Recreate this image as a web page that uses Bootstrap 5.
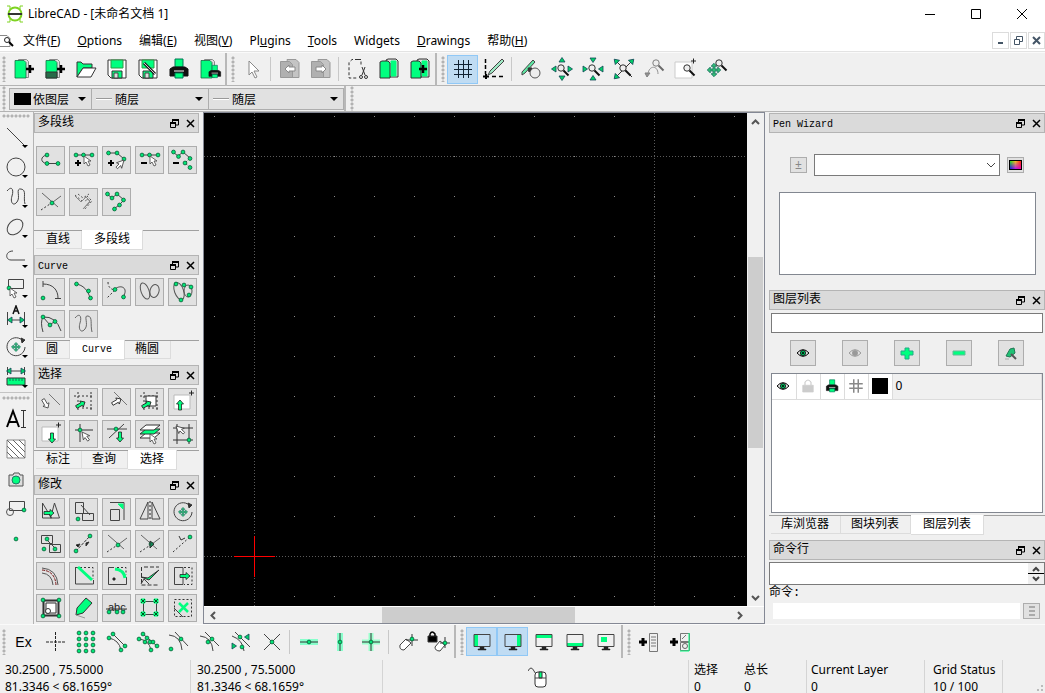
<!DOCTYPE html>
<html lang="zh-CN">
<head>
<meta charset="utf-8">
<meta name="viewport" content="width=device-width, initial-scale=1">
<title>LibreCAD - [未命名文档 1]</title>
<link href="https://cdn.jsdelivr.net/npm/bootstrap@5.3.0/dist/css/bootstrap.min.css" rel="stylesheet">
<style>
:root{--face:#f0f0f0;--edge:#adadad;--ink:#000;--green:#00ff7f}
body{font:12px/16px "Noto Sans","Noto Sans CJK SC",sans-serif;color:#000;background:var(--face);overflow:hidden}
button,input,select,ul,h2{font:inherit;color:inherit;margin:0}
button{background:none;border:0;padding:0;display:inline-flex;align-items:center;justify-content:center;flex:none}
svg{display:block;flex:none}
.title-row{height:28px}
.menu-row{height:24px;padding-top:2px;border-bottom:1px solid #e3e3e3}
.menu-row a{color:#000;text-decoration:none;padding:0 9px 0 8px;white-space:nowrap}
.win-btn{width:46px;height:28px}
.mdi-btn{width:17px;height:17px;border:1px solid #dcdcdc;margin-left:1px}
.tool-row{height:34px;border-bottom:1px solid #b4b4b4;border-top:1px solid #fafafa}
.tool-row button{width:31px;height:29px}
.tool-row button.on{background:#c0dcf3;border:1px solid #90c8f6}
.dots-v{width:8px;height:26px;background:radial-gradient(circle at 4px 2px,#b2b2b2 1px,transparent 2px) 0 0/8px 4px}
.dots-h{height:10px;width:28px;background:radial-gradient(circle at 2px 4px,#b2b2b2 1px,transparent 2px) 0 0/4px 10px}
.bar-edge{width:4px;height:33px;border-left:2px solid #b8b8b8}
.bar-sep{width:6px;height:24px;background:linear-gradient(90deg,transparent 2px,#c8c8c8 2px,#c8c8c8 3px,transparent 3px)}
.pen-row{height:26px;border-bottom:1px solid #b4b4b4}
.pen-row>.dots-v:first-child{margin-right:2px}
.pen-box{position:relative;border:1px solid var(--edge);background:#e1e1e1;height:22px;margin-left:-1px}
.pen-box select{appearance:none;border:0;background:none;height:20px;width:100%;padding:0 0 0 23px;outline:0;font-family:"Noto Sans CJK SC",sans-serif}
.pen-box::after{content:"";position:absolute;right:5px;top:8px;border:4px solid transparent;border-top-color:#000;border-bottom:0;pointer-events:none}
.pen-box i{position:absolute;left:4px;top:4px;width:17px;height:12px;background:#000}
.pen-box i.thin{top:9px;height:1px;width:16px;background:#fff;border-top:1px solid #999;box-sizing:content-box}
.side-tools{width:34px;border-right:1px solid #b4b4b4;padding-right:1px}
.side-tools button{width:32px;height:30px;position:relative}
.side-tools button.more::after{content:"";position:absolute;right:4px;bottom:4px;border:3px solid transparent;border-top-color:#000;border-bottom:0}
.side-split{border-top:1px solid #c4c4c4;width:100%;height:12px;padding-top:1px}
.dock-left{width:165px;padding-top:1px}
.dock-right{width:276px;padding-top:1px}
.dock-title{height:20px;background:#dadada;border:1px solid #b4b4b4;padding:0 0 0 3px}
.dock-title h2,.dock-tabs,.cjk{font-family:"Liberation Mono","Noto Sans CJK SC",sans-serif}
h2,.dock-tabs button{font-size:12px;line-height:16px}
.mono-s,.dock-tabs .mono-s{font-size:10px}
h2.mono-s{padding-top:3px}
.dock-title button{width:16px;height:16px}
.tool-grid{display:grid;grid-template-columns:repeat(5,29px);gap:4px;padding:3px 2px 0}
.tool-grid.roomy{padding-top:13px;row-gap:14px}
.tool-grid button,.sq{width:29px;height:28px;background:#e1e1e1;border:1px solid var(--edge)}
.dock-tabs{display:flex;border-top:1px solid #a0a0a0;padding-left:2px;margin:2px 0 5px;height:20px}
.dock-tabs.low{margin-top:14px}
.dock-tabs button{height:18px;padding:0 11px 0 10px;border:1px solid #dcdcdc;border-top:0;border-left:0}
.dock-tabs button.on{background:#fff;height:20px;margin-top:-1px;padding:0 12px}
.view{border:1px solid #848894;min-width:0}
.paper{background:#000;min-width:0;min-height:0;position:relative}
.paper svg{position:absolute;inset:0;width:100%;height:100%}
.scroll-v{width:17px}
.scroll-h{height:17px;border-top:1px solid #fff}
.scroll-v button{width:17px;height:17px}
.scroll-h button{width:17px;height:16px}
.track-v{width:15px;margin-left:1px;display:grid;grid-template-rows:127fr 192fr 141fr}
.track-h{display:grid;grid-template-columns:161fr 192fr 156fr}
.track-v i,.track-h i{background:#cdcdcd}
.field{border:1px solid #7a7a7a;background:#fff;border-radius:0;outline:0;padding:0 4px;min-width:0}
.swatch-row{padding:21px 21px 0;gap:7px}
.sq.tiny{width:17px;height:16px}
.sq.mid{width:26px;height:26px}
.pen-list{border:1px solid #828790;background:#fff;height:83px;margin:16px 9px 15px 10px}
.combo{position:relative}
.combo select{appearance:none;width:100%;height:22px}
.combo svg{position:absolute;right:4px;top:7px;pointer-events:none}
.filter-row{padding:3px 2px 0}
.filter-row input{height:20px}
.layer-tools{padding:7px 21px 0}
.layer-box{border:1px solid #828790;background:#fff;height:140px;margin:7px 2px 0}
.layer-box table{width:100%;border-collapse:collapse;background:#fff}
.layer-box td{width:24px;height:25px;padding:0 3px 0 2px;border:1px solid #dcdcdc;border-width:0 1px 1px 0}
.layer-box td:last-child{width:auto;padding-left:3px;background:#f0f0f0}
.blk{width:16px;height:16px;background:#000;margin-left:1px}
.cmd{position:relative;margin-top:2px}
.cmd input{width:100%;height:23px}
.cmd span{position:absolute;right:1px;top:1px;width:16px;height:21px;background:#f0f0f0}
.cmd-line{padding:2px 5px 0 4px;gap:3px}
.cmd-line input{height:16px}
.status{min-height:35px;line-height:17px;padding-top:2px;white-space:nowrap}
.status>div{border-left:1px solid #d4d4d4;height:33px;padding-top:1px}
.status>.no-line{border:0}
.s-pos{width:192px;padding-left:6px}
</style>
</head>
<body class="d-flex flex-column vh-100">
<header class="bg-white">
  <div class="title-row d-flex align-items-center">
    <svg class="ms-1 me-1" width="20" height="20" viewBox="0 0 20 20" fill="none"><circle cx="11" cy="10" r="6.500" stroke="#7ed321" stroke-width="2"/><path d="M3 2h3v3M19 2h-3v3M3 18h3v-3M19 18h-3v-3" stroke="#7ed321"/><path d="M4 10h14" stroke="#333" stroke-width="2"/></svg>
    <span>LibreCAD - [未命名文档 1]</span>
    <div class="ms-auto d-flex">
      <button class="win-btn" aria-label="最小化"><svg width="12" height="12" stroke="#000"><path d="M1 6.500h10"/></svg></button>
      <button class="win-btn" aria-label="最大化"><svg width="12" height="12" fill="none" stroke="#000"><path d="M1.500 1.500h9v9h-9z"/></svg></button>
      <button class="win-btn" aria-label="关闭"><svg width="12" height="12" stroke="#000"><path d="M1 1l10 10M11 1L1 11"/></svg></button>
    </div>
  </div>
  <nav class="menu-row d-flex align-items-center" aria-label="菜单">
    <svg width="15" height="16" fill="none"><path d="M0 2.500h7l3 3V13.500H0" stroke="#888"/><circle cx="7" cy="7" r="2.500" stroke="#222"/><path d="M9 9l4 4" stroke="#000" stroke-width="2"/></svg>
    <a href="#">文件(<u>F</u>)</a><a href="#"><u>O</u>ptions</a><a href="#">编辑(<u>E</u>)</a><a href="#">视图(<u>V</u>)</a><a href="#">Pl<u>u</u>gins</a><a href="#"><u>T</u>ools</a><a href="#">Widgets</a><a href="#"><u>D</u>rawings</a><a href="#">帮助(<u>H</u>)</a>
    <div class="ms-auto d-flex">
      <button class="mdi-btn" aria-label="最小化文档"><svg width="9" height="9" stroke="#456"><path d="M2 7h5" stroke-width="2"/></svg></button>
      <button class="mdi-btn" aria-label="还原文档"><svg width="9" height="9" fill="none" stroke="#456"><path d="M2.500 3V.5h6v5H6M.5 3.500h5v5h-5z"/></svg></button>
      <button class="mdi-btn" aria-label="关闭文档"><svg width="9" height="9" stroke="#456" stroke-width="2"><path d="M1 1l7 7M8 1L1 8"/></svg></button>
    </div>
  </nav>
</header>

<div class="tool-row d-flex align-items-center" data-tools=": new newtpl open save saveas print preview / select | undo redo | cut copy paste / grid* draft | redraw zin zout zauto zprev zwin zpan"></div>

<div class="pen-row d-flex align-items-center">
  <div class="dots-v"></div>
  <div class="pen-box" style="width:83px"><i></i><select aria-label="颜色"><option>依图层</option></select></div>
  <div class="pen-box" style="width:118px"><i class="thin"></i><select aria-label="线宽"><option>随层</option></select></div>
  <div class="pen-box" style="width:136px"><i class="thin"></i><select aria-label="线型"><option>随层</option></select></div>
  <div class="bar-edge align-self-stretch h-auto"></div><div class="dots-v"></div>
</div>

<main class="d-flex flex-grow-1" style="min-height:0">
  <aside class="side-tools d-flex flex-column align-items-center" data-tools="- line+ circ+ spl+ ell+ pl+ selm+ dim+ mod+ meas+ _ text hatch image block point"></aside>

  <div class="dock-left me-1">
    <section>
      <div class="dock-title d-flex align-items-center"><h2 class="flex-grow-1">多段线</h2></div>
      <div class="tool-grid roomy" data-tools="p1 p2 p3 p4 p5 p6 p7 p8"></div>
      <div class="dock-tabs low"><button>直线</button><button class="on">多段线</button></div>
    </section>
    <section>
      <div class="dock-title d-flex align-items-center"><h2 class="flex-grow-1 mono-s">Curve</h2></div>
      <div class="tool-grid" data-tools="c1 c2 c3 c4 c5 c6 c7"></div>
      <div class="dock-tabs"><button>圆</button><button class="on mono-s">Curve</button><button>椭圆</button></div>
    </section>
    <section>
      <div class="dock-title d-flex align-items-center"><h2 class="flex-grow-1">选择</h2></div>
      <div class="tool-grid" data-tools="s1 s2 s3 s4 s5 s6 s7 s8 s9 s10"></div>
      <div class="dock-tabs"><button>标注</button><button>查询</button><button class="on">选择</button></div>
    </section>
    <section>
      <div class="dock-title d-flex align-items-center"><h2 class="flex-grow-1">修改</h2></div>
      <div class="tool-grid" data-tools="m1 m2 m3 m4 m5 m6 m7 p6 m9 m10 m11 m12 m13 m14 m15 m16 m17 m18 m19 m20"></div>
    </section>
  </div>

  <div class="view d-flex flex-column flex-grow-1">
    <div class="d-flex flex-grow-1" style="min-height:0">
      <div class="paper flex-grow-1">
        <svg shape-rendering="crispEdges">
          <defs><pattern id="grid-dots" width="40" height="40" patternUnits="userSpaceOnUse"><rect x="10" y="3" width="1" height="1" fill="#8c8c8c"/></pattern></defs>
          <rect width="100%" height="100%" fill="url(#grid-dots)"/>
          <g stroke="#5a5a5a" stroke-dasharray="1 2"><line x1="50.500" x2="50.500" y2="100%"/><line x1="450.500" x2="450.500" y2="100%"/><line y1="43.500" y2="43.500" x2="100%"/><line y1="443.500" y2="443.500" x2="100%"/></g>
          <path d="M30 443.500h41M50.500 423v41" stroke="#f00"/>
        </svg>
      </div>
      <div class="scroll-v d-flex flex-column">
        <button aria-label="向上"><svg width="9" height="6" fill="none" stroke="#555" stroke-width="2"><path d="M1 5l3.500-3.500L8 5"/></svg></button>
        <div class="track-v flex-grow-1"><b></b><i></i></div>
        <button aria-label="向下"><svg width="9" height="6" fill="none" stroke="#555" stroke-width="2"><path d="M1 1l3.500 3.500L8 1"/></svg></button>
      </div>
    </div>
    <div class="scroll-h d-flex pe-3">
      <button aria-label="向左"><svg width="6" height="9" fill="none" stroke="#555" stroke-width="2"><path d="M5 1L1.500 4.500 5 8"/></svg></button>
      <div class="track-h flex-grow-1"><b></b><i></i></div>
      <button aria-label="向右"><svg width="6" height="9" fill="none" stroke="#555" stroke-width="2"><path d="M1 1l3.500 3.500L1 8"/></svg></button>
    </div>
  </div>

  <div class="dock-right ms-1">
    <section>
      <div class="dock-title d-flex align-items-center"><h2 class="flex-grow-1 mono-s">Pen Wizard</h2></div>
      <div class="swatch-row d-flex align-items-center">
        <button class="sq tiny" aria-label="添加" style="color:#888">±</button>
        <div class="combo flex-grow-1"><select class="field" aria-label="颜色收藏"><option></option></select><svg width="10" height="8" fill="none" stroke="#444"><path d="M1 2l4 4 4-4"/></svg></div>
        <button class="sq tiny" aria-label="选择颜色"><svg width="13" height="10"><defs><linearGradient id="hue"><stop stop-color="#0f0"/><stop offset=".5" stop-color="#fd0"/><stop offset="1" stop-color="#f00"/></linearGradient><linearGradient id="hue2"><stop stop-color="#00f"/><stop offset=".5" stop-color="#a0f"/><stop offset="1" stop-color="#f0a"/></linearGradient><linearGradient id="fade" x2="0" y2="1"><stop stop-color="#000"/><stop offset="1" stop-color="#fff"/></linearGradient><mask id="low"><rect width="13" height="10" fill="url(#fade)"/></mask></defs><rect width="13" height="10" fill="url(#hue)"/><rect width="13" height="10" fill="url(#hue2)" mask="url(#low)"/><rect x=".5" y=".5" width="12" height="9" fill="none" stroke="#000"/></svg></button>
      </div>
      <div class="pen-list"></div>
    </section>
    <section>
      <div class="dock-title d-flex align-items-center"><h2 class="flex-grow-1">图层列表</h2></div>
      <div class="filter-row d-flex"><input class="field flex-grow-1" aria-label="图层过滤"></div>
      <div class="layer-tools d-flex justify-content-between" id="layer-tools"></div>
      <div class="layer-box"><table><tr><td data-pic="eye"></td><td data-pic="lock"></td><td data-pic="printS"></td><td data-pic="hash"></td><td><div class="blk"></div></td><td>0</td></tr></table></div>
      <div class="dock-tabs"><button>库浏览器</button><button>图块列表</button><button class="on">图层列表</button></div>
    </section>
    <section>
      <div class="dock-title d-flex align-items-center"><h2 class="flex-grow-1">命令行</h2></div>
      <div class="cmd"><input class="field" aria-label="命令历史"><span><svg width="16" height="21" fill="none" stroke="#444" stroke-width="2"><path d="M5 8l3-3 3 3M5 14l3 3 3-3"/><path d="M0 10.500h16" stroke="#000" stroke-width="1"/></svg></span></div>
      <label class="cjk d-block" for="cmd">命令:</label>
      <div class="cmd-line d-flex"><input class="field border-0 flex-grow-1" id="cmd"><button class="sq tiny" aria-label="选项"><svg width="8" height="10" stroke="#aaa" stroke-width="2"><path d="M1 1h6M1 5h6M1 9h6"/></svg></button></div>
    </section>
  </div>
</main>

<div class="tool-row d-flex align-items-center border-bottom-0" data-tools=": ex free sgrid send son scen smid sdist sint | rh rv ro | rel lockrel / monL* monR* monT monB monF / addlist addblk"></div>

<footer class="status d-flex">
  <div class="s-pos no-line" style="width:190px;padding-left:5px">30.2500 , 75.5000<br>81.3346 &lt; 68.1659°</div>
  <div class="s-pos">30.2500 , 75.5000<br>81.3346 &lt; 68.1659°</div>
  <div class="flex-grow-1 d-flex justify-content-center align-items-center ps-2" data-pic="mouse"></div>
  <div style="width:51px;padding-left:5px">选择<br>0</div>
  <div class="no-line" style="width:67px;padding-left:5px">总长<br>0</div>
  <div style="width:118px;padding-left:4px">Current Layer<br>0</div>
  <div style="width:78px;padding-left:8px">Grid Status<br>10 / 100</div>
  <div class="d-flex align-items-end justify-content-end" style="width:43px"><svg width="8" height="8" fill="#bbb"><path d="M4 0h2v2H4zM0 4h2v2H0zM4 4h2v2H4z"/></svg></div>
</footer>

<script src="https://cdn.jsdelivr.net/npm/bootstrap@5.3.0/dist/js/bootstrap.bundle.min.js"></script>
<script>
const G = '#00ff7f';
// small drawing helpers, all on a 24x24 grid
const dot = (...a) => { let s = ''; for (let i = 0; i < a.length; i += 2) s += `<circle cx="${a[i]}" cy="${a[i+1]}" r="1.900" fill="#00e676" stroke="#0a5c36" stroke-width=".8"/>`; return s; };
const ln = (d, c = '#444', w = 1, x = '') => `<path d="${d}" fill="none" stroke="${c}" stroke-width="${w}" ${x}/>`;
const fl = (d, f = G, s = '#333', w = 1) => `<path d="${d}" fill="${f}" stroke="${s}" stroke-width="${w}"/>`;
const dash = (d, c = '#333', p = '2 2') => ln(d, c, 1, `stroke-dasharray="${p}"`);
const at = (x, y, r, s) => `<g transform="translate(${x} ${y}) rotate(${r})">${s}</g>`;
const cur = (x, y, r = 0, f = '#fff') => at(x, y, r, fl('M0 0v8l2-2 2 4 2-1-2-4h3z', f, '#444', .8));
const arr = (x, y, r, f = G) => at(x, y, r, fl('M0 0l3.500 4H1.500v6h-3V4h-2z', f, '#222', .8));
const plus = (x, y) => ln(`M${x-3} ${y}h6M${x} ${y-3}v6`, '#000', 2);
const big = (x, y) => ln(`M${x-4} ${y}h8M${x} ${y-4}v8`, '#000', 2.500);
const thin = (x, y) => ln(`M${x-2} ${y}h5M${x+.5} ${y-2.5}v5`, '#222');
const mag = (x, y) => `<circle cx="${x}" cy="${y}" r="3.200" fill="#eee" stroke="#333"/>` + ln(`M${x+2.500} ${y+2.500}l5 5`, '#111', 2);
const tri = (x, y, r) => at(x, y, r, fl('M0-2.500l3 4.500h-6z', '#00d46a', '#145', .8));
const sheet = fl('M6.500 2.500h8l2 2v16h-10z', '#ddd', '#888') + fl('M3 3.500h9l2 2V21H3z', G, '#176b43', .8);
const flop = fl('M3 3h18v18H6l-3-3z', '#fff', '#333') + fl('M6 3h12v8H6z', G, '#394') + fl('M7 14h10v7H7z', G, '#333') + fl('M9 16h4v5H9z', '#ddd', '#444');
const prn = (f) => `<g transform="${f || ''}">` + fl('M8 2h8v8H8z', G, '#075') + fl('M6 10h12l3 2v7H3v-7z', '#111', '#111') + fl('M8 16h8v5H8z', G, '#075') + ln('M7 14h10', '#fff') + '</g>';
const mon = (r) => `<path d="${r}" fill="${G}"/>` + ln('M4 4.500h16v12H4z', '#444') + fl('M10 17h4v2h2v1H8v-1h2z', '#222', '#222', .5);
const move4 = (x, y, k = 1) => `<g transform="translate(${x} ${y}) scale(${k})">` + fl('M0-7l3 3H1v3h3v-2l3 3-3 3V1H1v3h2L0 7l-3-3h2V1h-3v2l-3-3 3-3v2h3v-3h-2z', '#2fc274', '#276') + '</g>';
const rotArc = ln('M18 5A9 9 0 1 0 21 12') + fl('M17 3l4 2-3 3z', '#333');
const cut = '<circle cx="15" cy="20" r="1.500" fill="none" stroke="#333"/><circle cx="20" cy="20" r="1.500" fill="none" stroke="#333"/>' + ln('M16 18l3-8M19 18l-3-8', '#333');
const pencil = fl('M8 14L20 2l2 2L10 16l-4 2z', '#9fe8c4', '#444');
const eye = (g, s) => fl('M4 12q8-9 16 0q-8 9-16 0z', '#e1e1e1', s, 1.300) + `<circle cx="12" cy="12" r="3.500" fill="${g}" stroke="${s}"/><circle cx="12" cy="12" r="1.300" fill="${s}"/>`;
const undo = fl('M9 2.500h9l3 3v15h-9z', '#c4c4c4', '#999') + fl('M2.500 4.500h9l3 3v13h-12z', '#b0b0b0', '#999');
const I = {
new: sheet + big(18, 12), newtpl: sheet + fl('M3 15h11v6H3z', '#276b48') + big(18, 12),
open: fl('M3 20V5h4l2 2h9v4H9z') + fl('M3 20l6-9h13l-5 9z', '#fff'),
save: flop, saveas: flop + ln('M8 6l11 11', '#222', 3) + ln('M8 6l11 11', '#ccc'),
print: prn(), preview: sheet + prn('translate(9 7) scale(.65)'),
select: fl('M8 4v14l3-3 3 6 2-1-3-6h5z', '#fff', '#888'),
undo: undo + fl('M7 12l4-4v2h6v4h-6v2z', '#fff', '#888'), redo: undo + fl('M17 12l-4-4v2H7v4h6v2z', '#fff', '#888'),
cut: dash('M12 2.500H6l-3 3V21h8M12 2.500h3V9', '#333', '3 2') + cut,
copy: fl('M9 3l2-1h8l2 2v16h-8z', '#ddd', '#333') + fl('M14 4h5v15h-5z', G, G) + fl('M3 5l2-1h6l2 2v15H3z'), paste: fl('M9 3l2-1h8l2 2v16h-8z', '#ddd', '#333') + fl('M14 4h5v15h-5z', G, G) + fl('M3 5l2-1h6l2 2v15H3z') + big(15, 12),
grid: ln('M7.500 3v18M12.500 3v18M17.500 3v18M3 7.500h18M3 12.500h18M3 17.500h18', '#123'),
draft: ln('M3.500 2v15', '#000', 1.500, 'stroke-dasharray="4 2"') + ln('M1 19.500h6', '#000', 2) + ln('M4 17v5', '#000', 2) + ln('M10 19.500h12', '#000', 1.500, 'stroke-dasharray="4 3"') + pencil,
redraw: `<circle cx="16" cy="16" r="5" fill="#eee" stroke="#555"/>` + fl('M3 15L14 3l2 2L6 16l-3 2z', '#5fe8a4', '#444') + fl('M9 11h4l-3 4z', '#333'),
zin: mag(11, 11) + tri(12, 3, 0) + tri(12, 21, 180) + tri(4, 12, -90) + tri(20, 12, 90),
zout: mag(11, 11) + tri(12, 3, 180) + tri(12, 21, 0) + tri(4, 12, 90) + tri(20, 12, -90),
zauto: ln('M4 4l16 16M20 4L4 20', '#333') + mag(11, 11) + tri(4, 4, -45) + tri(20, 4, 45) + tri(4, 20, -135),
zprev: `<g opacity=".6">` + mag(13, 6) + ln('M5 17C6 8 15 8 15 17', '#555') + fl('M2 16h5l-3 4z', '#555') + '</g>',
zwin: fl('M1 5h17v16H1z', '#fff', '#ccc') + mag(13, 11) + thin(19, 4),
zpan: move4(9, 13, .95) + mag(14, 6),
line: ln('M3 3l18 18'), circ: `<circle cx="12" cy="12" r="9" fill="none" stroke="#444"/>`,
spl: ln('M3 6C8 0 10 5 8 11S9 22 13 17 11 3 17 4 19 12 21 19'), ell: '<ellipse cx="11" cy="12" rx="9" ry="6.500" fill="none" stroke="#444" transform="rotate(-45 11 12)"/>',
pl: ln('M9 6C1 6 1 15 7 15H21'), selm: ln('M4.500 4.500h15v9h-15z') + dot(5, 13) + cur(6, 13),
dim: ln('M3.500 7v13M20.500 7v13M5 15h14') + tri(6, 15, -90) + tri(18, 15, 90) + ln('M9 9l3-8 3 8M10 6h4', '#111', 1.500),
mod: rotArc + move4(12, 12, .65),
meas: ln('M3.500 2v8M20.500 2v8M5 6h14') + tri(5, 6, -90) + tri(19, 6, 90) + fl('M3 13h18v7H3z') + ln('M6 13v3M9 13v3M12 13v3M15 13v3M18 13v3', '#175'),
text: ln('M3 20L9 4l6 16M5 15h8', '#000', 2) + ln('M19.500 3v18M17 3.500h5M17 20.500h5', '#333'),
hatch: fl('M3 3h18v18H3z', '#fff', '#888') + ln('M3 9l12 12M3 3l18 18M9 3l12 12M15 3l6 6M3 15l6 6', '#666'),
image: fl('M5 8h4l1-2h5l1 2h3v11H5z', '#ddd', '#555') + `<circle cx="12" cy="13" r="4" fill="${G}" stroke="#276"/>`,
block: ln('M5.500 4.500h15v9h-15z') + '<circle cx="6" cy="15" r="3.500" fill="none" stroke="#555"/>' + dot(20, 13), point: dot(12, 12),
p1: ln('M8 7C1 8 1 15 8 15.500H19') + dot(8, 7, 8, 15.5, 19, 15.5),
p2: ln('M4 7H20') + dot(4, 7, 11.5, 7, 20, 7) + plus(6, 15) + cur(12, 8), p3: ln('M3 5H12L19 11') + dot(3.5, 5, 12, 5, 19, 11) + plus(6, 15) + cur(19, 12, 70),
p4: ln('M4 7H20') + dot(4, 7, 11.5, 7, 20, 7) + ln('M3 15h6', '#000', 2) + cur(12, 8),
p5: ln('M2 4l5 4 5-4 7 6') + dash('M19 10l-5 5 5 4') + dot(2.5, 4, 12, 4, 7.5, 8.5, 19, 10.5, 14, 15, 19, 19.5) + ln('M2 15h6', '#000', 2),
p6: ln('M3 3l16 14M14 12l8-6', '#666') + dash('M2 20l12-8') + dot(13, 13), p7: dash('M3 5l7 6 5-5 5 5-8 9M6 4l5 4 6-4', '#555') + ln('M13 11l3-2 2 3-6 6M3 6l6 6 5-5 4 4-7 8', '#888'),
p8: ln('M2 4l5 4 5-4 7 6-5 5-5 4') + dot(2.5, 4, 12, 4, 7, 8, 18.5, 10, 14.5, 15, 9.5, 19),
c1: ln('M4 4C14 4 19 10 19 18M4 1v6M16 18.500h6') + dot(4, 18), c2: ln('M4 4C11 5 16 10 18 18') + dot(4.5, 4, 16.5, 11, 18.5, 18),
c3: dash('M3 2q0 7 7 8L2 18') + ln('M10 9C16 4 24 8 18 17') + dot(10, 9.5, 18.5, 17),
c4: '<ellipse cx="7" cy="11" rx="4" ry="8.500" fill="none" stroke="#555" transform="rotate(-20 7 11)"/><ellipse cx="16.500" cy="11" rx="4.500" ry="6.500" fill="none" stroke="#555" transform="rotate(15 16.500 11)"/>',
c5: '<ellipse cx="8" cy="11" rx="4.500" ry="9" fill="none" stroke="#555" transform="rotate(-20 8 11)"/><ellipse cx="17" cy="11" rx="4" ry="6" fill="none" stroke="#555"/>' + dot(5, 4, 13, 5, 20, 7, 18, 15, 10, 20),
c6: ln('M4 20Q1 10 4 5q13-1 18 14M4 5l7 8 5-4') + dot(4, 5, 16, 9.5, 11, 13), c7: ln('M3 6C8 0 10 5 8 11S9 22 13 17 11 3 16 4 18 12 20 20', '#666'),
s1: ln('M10 4l11 11', '#777') + at(9, 18, 150, fl('M0 0l3.500 4H1.500v6h-3V4h-2z', '#fff', '#444', .8)), s2: dash('M2 6h20M6 2v18M19 2v18M10 18h10') + arr(13, 12, 60),
s3: ln('M9 2l13 13', '#777') + arr(16, 9, 60, '#fff'), s4: dash('M2 6h20M6 2v18M19 2v18M10 18h12') + fl('M8 6h10v10H8z', '#fff') + arr(13, 12, 60),
s5: fl('M3 5h16v14H3z', '#fff', '#bbb') + arr(9, 10, 0) + thin(20, 3), s6: fl('M3 5h16v14H3z', '#fff', '#bbb') + arr(13, 21, 180) + thin(19, 3),
s7: ln('M8 2v18M3 8h18', '#333') + cur(10, 10, -10) + dot(8, 8), s8: ln('M2 7h20M4 16L19 2') + dot(11, 7) + arr(15, 20, 180),
s9: fl('M2 16l6-5h14l-6 5z', '#fff') + fl('M2 12l6-5h14l-6 5z') + fl('M2 8l6-5h14l-6 5z', '#fff') + cur(12, 12), s10: ln('M2 6h20M6 2v20M18 2v20M2 18h20', '#333') + cur(5, 4, -20) + dot(18, 18),
m1: ln('M3.500 3v15h9zM20.500 18h-9l4-15z') + arr(15, 13, 90), m2: ln('M3.500 2.500h8v11h-8zM10.500 13.500h11v7h-11zM9 5l9 10') + dot(6, 19),
m3: ln('M5 2.500h14V20M5.500 9.500h9v11h-9z') + fl('M13 4h5v5z', G, G), m4: ln('M10 2v17H2zM14 2v17h8z') + dash('M12 1v20', '#222'), m5: rotArc + move4(12, 12, .65),
m6: ln('M2.500 3.500h11v8h-11zM10.500 12.500h11v8h-11zM8 8l8 8') + dot(8, 7, 5, 17, 16, 17), m7: dash('M4 19L18 4', '#333', '3 1') + dot(4, 19, 18, 4) + fl('M4 13l4-1-2 3zM17 10l-3 4 0-3z', '#111'),
m9: ln('M3 3l16 14M14 12l8-6', '#666') + dash('M2 20l12-8') + dot(13, 12) + fl('M12 9l4 3-4 4z', '#185'), m10: dash('M2 20L20 4') + ln('M8 4l2 4 4-2', '#333') + dot(19, 5),
m11: ln('M3 4Q18 5 19 21M3 9Q13 10 14 21', '#555') + dash('M3 6Q16 7 17 21', '#711', '3 1'),
m12: ln('M3.500 3v17h18V16M3 3.500h3') + dash('M8 3.500h13V15') + ln('M6 3L20 16', G, 3), m13: ln('M9 3.500H3.500v17h18V13') + dash('M12 3.500h9V11') + ln('M10 5q9 1 10 9', G, 3) + fl('M8 14h2v2H8z', '#000'),
m14: dash('M3.500 3v18h18M6 3h15', '#333', '4 2') + fl('M3 13l7 1L21 6l-10 10z') + ln('M3 20l3-5 5 5'), m15: ln('M12 3.500H3.500v17H12z') + dash('M13 3.500h8v17h-8') + arr(19, 12, 90),
m16: ln('M4.500 4.500h15v15h-15z', '#333', 2) + fl('M7 7h10v10H7z', '#fff') + '<circle cx="9" cy="15" r="2.500" fill="#fff" stroke="#333"/>' + dot(4, 4, 20, 4, 4, 20, 20, 20),
m17: fl('M5 12L14 2l6 5-9 10-7 2z') + ln('M4 19l9 3', '#999'), m18: '<text x="3" y="15" font-size="11" font-family="Liberation Sans" fill="#222">abc</text>' + ln('M1 13h21', '#333') + dot(4, 16, 12, 16, 18, 16),
m19: ln('M5.500 5.500h13v13h-13z') + [[5,5],[18,5],[5,18],[18,18]].map(p => fl(`M${p[0]-2} ${p[1]-2}h4v4h-4z`, G, G) + ln(`M${p[0]-2} ${p[1]-2}l4 4m0-4l-4 4`, '#052')).join(''),
m20: dash('M3.500 3.500h17v17h-17z') + ln('M8 7l9 9M17 7l-9 9', G, 2.500) + ln('M3 12l9 9'),
free: dash('M3 12h19M12.500 2v19', '#222', '3 1'), sgrid: dot(5,3,12,3,19,3,5,9,12,9,19,9,5,15,12,15,19,15,5,21,12,21,19,21),
send: ln('M8 4L20 16M4 8Q14 10 16 20') + dot(8, 4, 20, 16, 4, 8, 16, 20), son: ln('M7 4L21 16M3 9Q13 10 15 20') + dot(7, 4, 21, 16, 3, 9, 15, 20, 9, 12, 14, 12, 11, 8, 17, 12),
scen: ln('M8 2l13 14M2 5Q14 6 15 20') + dot(14, 9, 4, 19), smid: ln('M7 2l14 14M2 6Q14 7 15 21') + dot(14, 9, 10, 12), sdist: ln('M6 2l15 15M3 6Q14 10 15 21') + dot(11, 7, 13, 17) + tri(18, 7, -90) + tri(5, 16, 90),
sint: ln('M4 4l16 16M20 4L4 20') + dot(12, 12),
rh: ln('M3 12h18', '#8fc', 6) + ln('M3 12h18', '#333') + dot(12, 12), rv: ln('M12 3v18', '#8fc', 6) + ln('M12 3v18', '#333') + dot(12, 12), ro: ln('M3 12h18M12 3v18', '#9fc', 5) + ln('M3 12h18M12 3v18', '#333') + dot(12, 12),
rel: fl('M4 15l6-6 5 4-7 7q-5 0-4-5z', '#fff', '#444') + ln('M10 10h12M16 4v12', '#333') + dot(16, 9), lockrel: fl('M1 6h9v6H1z', '#000') + ln('M3 6V4q2-4 5 0v2', '#000', 1.500) + fl('M8 17l5-6 5 4-5 6q-5 0-5-4z', '#fff', '#444') + ln('M13 13h10M18 7v11', '#333') + dot(18, 13),
monL: mon('M4 5h4v11H4z'), monR: mon('M16 5h4v11h-4z'), monT: mon('M4 5h16v3H4z'), monB: mon('M4 13h16v3H4z'), monF: mon('M7 7h6v5H7z'),
addlist: ln('M2 12h8M6 8v8', '#000', 3) + ln('M12.500 3.500h8v18h-8zM14 7h5M14 10h5M14 13h5M14 16h5', '#777'), addblk: ln('M2 12h8M6 8v8', '#000', 3) + ln('M12.500 3.500h9v8h-9zM12.500 12.500h9v8h-9zM14 9l4-4', '#777') + ln('M21 3v18h-9', G) + '<circle cx="17" cy="16" r="2.500" fill="none" stroke="#666"/>',
eye: eye('#00b35a', '#000'), eyeOff: eye('#999', '#999'), lock: fl('M5 11h14v9H5z', '#ccc', '#ccc') + ln('M8 11V7q4-6 8 0v4', '#ccc', 1.500), printS: prn('translate(2 2) scale(.85)'),
hash: ln('M9 3v18M15 3v18M3 9h18M3 15h18', '#888', 2), add: fl('M10 7h4v3h4v4h-4v4h-4v-4H6v-4h4z', G, '#2a8'), sub: fl('M6 10h12v4H6z', G, '#6b9'),
edit: fl('M7 15l4-7 4-1 1 5-5 4z', '#1fc274', '#275') + ln('M12 13l5 5', '#555', 2) + ln('M6 18h4', '#aaa'),
mouse: ln('M0 6q3-6 6 0t6 2', '#444') + fl('M7 10q0-3 3-3h5q3 0 3 3v9q0 3-3 3h-5q-3 0-3-3z', '#fff') + fl('M11 7h3v6h-3z') + ln('M7 13h11')
};
const pic = (n, s = 24) => `<svg width="${s}" height="${s}" viewBox="0 0 24 24" aria-hidden="true">${I[n]}</svg>`;
document.querySelectorAll('[data-tools]').forEach(box => {
  box.innerHTML = box.dataset.tools.split(' ').map(t => {
    if (t === ':') return '<div class="dots-v"></div>';
    if (t === '/') return '<div class="bar-edge"></div><div class="dots-v"></div>';
    if (t === '|') return '<div class="bar-sep"></div>';
    if (t === '-') return '<div class="dots-h"></div>';
    if (t === '_') return '<div class="side-split"><div class="dots-h mx-auto"></div></div>';
    const n = t.replace(/[*+]/, ''), c = t.endsWith('*') ? 'on' : t.endsWith('+') ? 'more' : '';
    return n === 'ex' ? '<button style="font:14px Liberation Sans">Ex</button>' : `<button class="${c}" aria-label="${n}">${pic(n)}</button>`;
  }).join('');
});
document.querySelectorAll('[data-pic]').forEach(e => e.innerHTML = pic(e.dataset.pic, e.tagName === 'TD' ? 18 : 24));
document.getElementById('layer-tools').innerHTML = ['eye', 'eyeOff', 'add', 'sub', 'edit'].map(n => `<button class="sq mid" aria-label="${n}">${pic(n, n.startsWith('eye') ? 18 : 24)}</button>`).join('');
document.querySelectorAll('.dock-title').forEach(t => t.insertAdjacentHTML('beforeend',
  '<button aria-label="浮动"><svg width="9" height="9" fill="none" stroke="#000"><path d="M2.500 3V1h6v5H6M.5 4h5v4.500h-5z" /><path d="M2 1h7M0 4h6" stroke-width="2"/></svg></button><button aria-label="关闭"><svg width="9" height="9" stroke="#000" stroke-width="1.500"><path d="M1 1l7 7M8 1L1 8"/></svg></button>'));
</script>
</body>
</html>
